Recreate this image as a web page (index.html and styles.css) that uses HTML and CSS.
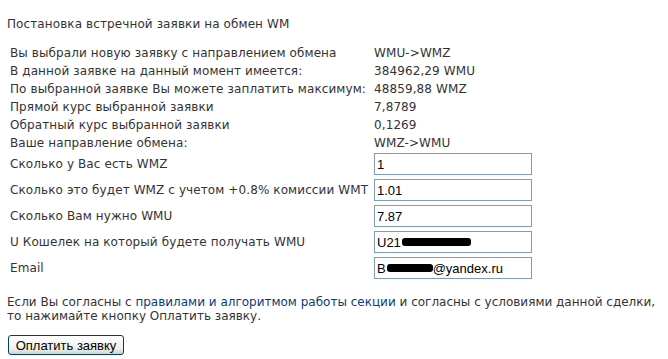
FILE: index.html
```html
<!DOCTYPE html>
<html>
<head>
    <title>Постановка встречной заявки</title>
    <link rel="stylesheet" href="styles.css">
</head>
<body>
    <div class="page">
        <h1 class="title">Постановка встречной заявки на обмен WM</h1>

        <div class="info">
            <div class="row"><span class="label">Вы выбрали новую заявку с направлением обмена</span><span class="value">WMU-&gt;WMZ</span></div>
            <div class="row"><span class="label">В данной заявке на данный момент имеется:</span><span class="value">384962,29 WMU</span></div>
            <div class="row"><span class="label">По выбранной заявке Вы можете заплатить максимум:</span><span class="value">48859,88 WMZ</span></div>
            <div class="row"><span class="label">Прямой курс выбранной заявки</span><span class="value">7,8789</span></div>
            <div class="row"><span class="label">Обратный курс выбранной заявки</span><span class="value">0,1269</span></div>
            <div class="row"><span class="label">Ваше направление обмена:</span><span class="value">WMZ-&gt;WMU</span></div>
        </div>

        <form class="form">
            <div class="form-row">
                <label class="label">Сколько у Вас есть WMZ</label>
                <input type="text" class="field" value="1">
            </div>
            <div class="form-row">
                <label class="label">Сколько это будет WMZ с учетом +0.8% комиссии WMT</label>
                <input type="text" class="field" value="1.01">
            </div>
            <div class="form-row">
                <label class="label">Сколько Вам нужно WMU</label>
                <input type="text" class="field" value="7.87">
            </div>
            <div class="form-row">
                <label class="label">U Кошелек на который будете получать WMU</label>
                <!-- blacked out on the screenshot -->
                <div class="field">U21<span class="mask mask-purse"></span></div>
            </div>
            <div class="form-row">
                <label class="label">Email</label>
                <div class="field">B<span class="mask mask-email"></span>@yandex.ru</div>
            </div>
        </form>

        <p class="agree">Если Вы согласны с <a href="#">правилами и алгоритмом работы секции</a> и согласны с условиями данной сделки,<br>то нажимайте кнопку Оплатить заявку.</p>

        <button type="button" class="pay">Оплатить заявку</button>
    </div>
</body>
</html>
```

FILE: styles.css
```css
body {
    margin: 0;
    font-family: "DejaVu Sans", Verdana, sans-serif;
    font-size: 12px;
    letter-spacing: 0.1px;
    color: #333;
    background: #fff;
}
.page {
    padding: 15px 0 0 7px;
}
.title {
    margin: 0 0 11px 0;
    font-size: 12px;
    font-weight: normal;
    line-height: 18px;
}
.info {
    padding-left: 3px;
}
.row {
    display: flex;
    line-height: 18px;
}
.row .label {
    width: 364px;
    white-space: nowrap;
}
.form {
    margin: 1px 0 0 0;
    padding-left: 3px;
    display: flex;
    flex-direction: column;
    gap: 4px;
}
.form-row {
    display: flex;
    align-items: center;
    height: 22px;
}
.form-row .label {
    width: 364px;
    white-space: nowrap;
}
.field {
    box-sizing: border-box;
    display: flex;
    align-items: center;
    width: 158px;
    height: 22px;
    margin: 0;
    padding: 0 2px;
    border: 1px solid #7f9db9;
    font-family: "Liberation Sans", Arial, sans-serif;
    font-size: 13px;
    letter-spacing: 0;
    color: #000;
    background: #fff;
    outline: none;
}
.mask {
    display: inline-block;
    height: 8px;
    background: #000;
    border-radius: 3px;
}
.mask-purse {
    width: 69px;
    margin-left: 1px;
}
.mask-email {
    width: 46px;
    margin-left: 1px;
}
.agree {
    margin: 16px 0 0 0;
    line-height: 14px;
    letter-spacing: 0;
    white-space: nowrap;
}
.agree a {
    color: #0a3c78;
    text-decoration: none;
}
.pay {
    margin: 12px 0 0 1px;
    width: 116px;
    height: 20px;
    padding: 0;
    border: 1px solid #003c74;
    border-radius: 3px;
    background: linear-gradient(#ffffff, #f0f0ea 70%, #d6d0c5);
    font-family: "Liberation Sans", Arial, sans-serif;
    font-size: 13px;
    letter-spacing: 0;
    color: #000;
}
```
